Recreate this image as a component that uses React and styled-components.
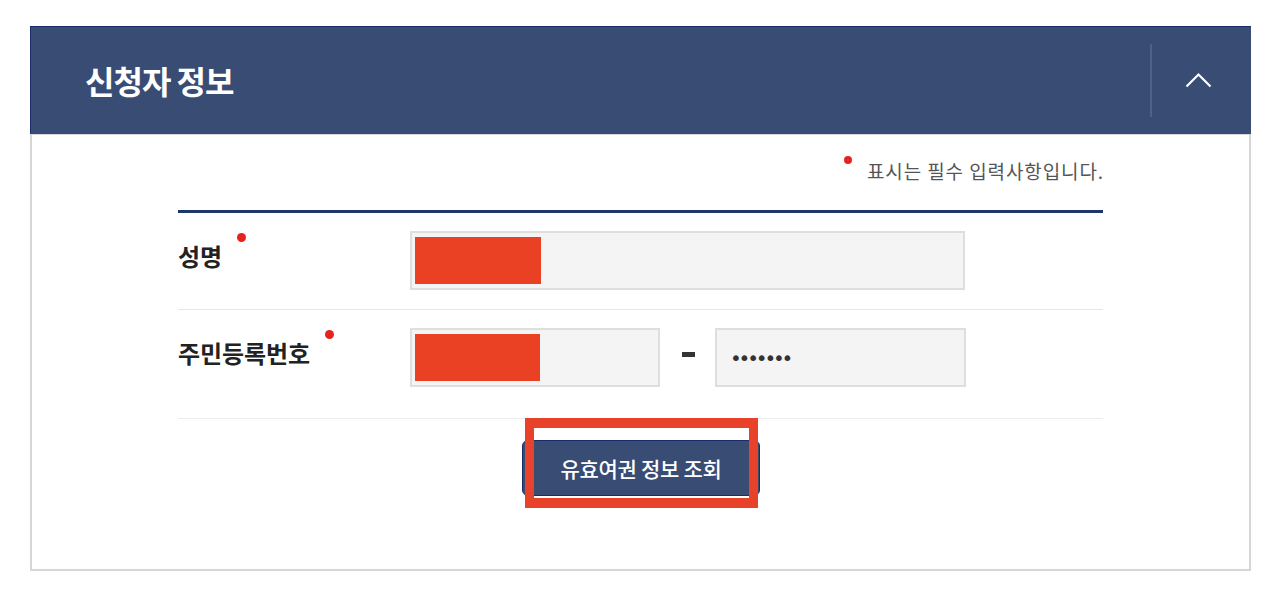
import React from 'react'
import styled, { createGlobalStyle } from 'styled-components'

const GlobalStyle = createGlobalStyle`
  body {
    margin: 0;
    background: #fff;
    font-family: "Noto Sans CJK KR", "Noto Sans", sans-serif;
  }
`

export default function App() {
  return (
    <>
      <GlobalStyle />
      <Page>
        <Panel>
          <Header>
            <Title>신청자 정보</Title>
            <Toggle>
              <svg width="27" height="16" viewBox="0 0 27 16">
                <path d="M1.5 14.5 L13.5 2.5 L25.5 14.5" fill="none" stroke="#fff" strokeWidth="2.2" />
              </svg>
            </Toggle>
          </Header>
          <Body>
            <Note>
              <NoteDot />
              <NoteText>표시는 필수 입력사항입니다.</NoteText>
            </Note>
            <Table>
              <Row $padBottom={19}>
                <LabelCell>
                  <LabelText>성명</LabelText>
                  <ReqDot />
                </LabelCell>
                <Fields>
                  <Input $width={555}>
                    <Mask $width={126} />
                  </Input>
                </Fields>
              </Row>
              <Row $padBottom={31} $last>
                <LabelCell>
                  <LabelText>주민등록번호</LabelText>
                  <ReqDot />
                </LabelCell>
                <Fields>
                  <Input $width={250}>
                    <Mask $width={125} />
                  </Input>
                  <Dash />
                  <Input $width={251}>
                    <Secret>•••••••</Secret>
                  </Input>
                </Fields>
              </Row>
            </Table>
            <Actions>
              <ButtonWrap>
                <SearchButton>유효여권 정보 조회</SearchButton>
                <Highlight />
              </ButtonWrap>
            </Actions>
          </Body>
        </Panel>
      </Page>
    </>
  )
}

const Page = styled.div`
  padding: 26px 19px 20px 30px;
`

const Panel = styled.section`
  width: 1221px;
`

const Header = styled.div`
  height: 108px;
  box-sizing: border-box;
  background: #394c74;
  border-top: 1px solid #1a2d68;
  border-left: 1px solid #1a2d68;
  display: flex;
  align-items: center;
  justify-content: space-between;
  padding-left: 54px;
`

const Title = styled.h2`
  margin: 0 0 2px;
  color: #fff;
  font-size: 32px;
  font-weight: 700;
  letter-spacing: -1px;
`

const Toggle = styled.div`
  height: 73px;
  width: 101px;
  border-left: 2px solid #4f6189;
  display: flex;
  align-items: center;
  justify-content: center;
  padding-right: 7px;
  padding-bottom: 1px;
  box-sizing: border-box;
`

const Body = styled.div`
  border: 2px solid #d6d6d6;
  border-top: 1px solid #d6d6d6;
  padding: 12px 146px 73px;
`

const Note = styled.div`
  display: flex;
  justify-content: flex-end;
  align-items: center;
  height: 46px;
  padding-bottom: 4px;
`

const NoteDot = styled.span`
  width: 8px;
  height: 8px;
  border-radius: 50%;
  background: #e4231e;
  margin-right: 15px;
  margin-top: -20px;
`

const NoteText = styled.span`
  font-size: 19px;
  color: #555;
  letter-spacing: 0.9px;
  margin-right: -1px;
`

const Table = styled.div`
  margin-top: 13px;
  border-top: 3px solid #1c386b;
`

const Row = styled.div`
  display: flex;
  align-items: center;
  padding: 18px 0 ${p => p.$padBottom}px;
  border-bottom: 1px solid ${p => (p.$last ? '#ececec' : '#e6e6e6')};
`

const LabelCell = styled.div`
  width: 232px;
  display: flex;
  align-items: flex-start;
  padding-bottom: 10px;
`

const LabelText = styled.span`
  font-size: 24px;
  font-weight: 700;
  color: #222;
  line-height: 30px;
  letter-spacing: -0.1px;
`

const ReqDot = styled.span`
  width: 9px;
  height: 9px;
  border-radius: 50%;
  background: #e4231e;
  margin-left: 15px;
  margin-top: -8px;
`

const Fields = styled.div`
  display: flex;
  align-items: center;
`

const Input = styled.div`
  width: ${p => p.$width}px;
  height: 59px;
  box-sizing: border-box;
  background: #f4f4f4;
  border: 2px solid #dedede;
  display: flex;
  align-items: center;
  padding: 3px;
`

const Mask = styled.div`
  width: ${p => p.$width}px;
  height: 47px;
  background: #ea4125;
`

const Dash = styled.span`
  width: 13px;
  height: 5px;
  background: #333;
  margin: -7px 20px 0 22px;
`

const Secret = styled.span`
  font-family: "DejaVu Sans", sans-serif;
  font-size: 20px;
  letter-spacing: -3.2px;
  color: #333;
  padding-left: 10px;
`

const Actions = styled.div`
  display: flex;
  justify-content: center;
  padding-top: 21px;
  padding-left: 1px;
`

const ButtonWrap = styled.div`
  position: relative;
`

const SearchButton = styled.button`
  width: 238px;
  height: 56px;
  background: #394c74;
  border: 1px solid #1a2d68;
  border-radius: 6px;
  color: #fff;
  font-family: "Noto Sans CJK KR", "Noto Sans", sans-serif;
  font-size: 21px;
  font-weight: 500;
  letter-spacing: -0.3px;
  cursor: pointer;
`

const Highlight = styled.div`
  position: absolute;
  left: 3px;
  right: 2px;
  top: -22px;
  bottom: -12px;
  border: 9px solid #e8432a;
  border-top-width: 10px;
  border-bottom-width: 10px;
  pointer-events: none;
`
